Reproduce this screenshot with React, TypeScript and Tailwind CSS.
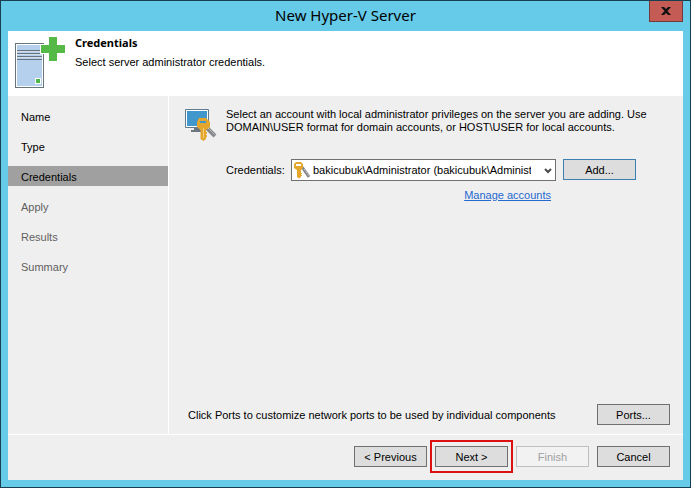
import { useState } from "react";
import type { ButtonHTMLAttributes } from "react";

const steps = ["Name", "Type", "Credentials", "Apply", "Results", "Summary"];
const currentStep = 2;

function stepColor(index: number) {
  if (index === currentStep) return "bg-[#a0a0a0] text-black";
  return index < currentStep ? "text-black" : "text-[#5f5f5f]";
}

function Button({ className = "border-[#707070] bg-[#dddddd] text-black", ...props }: ButtonHTMLAttributes<HTMLButtonElement>) {
  return <button type="button" className={`h-[21px] w-[73px] shrink-0 border ${className}`} {...props} />;
}

function ServerIcon() {
  return (
    <svg width="52" height="52" viewBox="0 0 52 52" aria-hidden="true" shapeRendering="crispEdges">
      <rect x="1.5" y="7.5" width="28" height="44" fill="#fff" stroke="#69757d" />
      <rect x="3" y="9" width="25" height="41" fill="#b5d0ed" />
      <path d="M3 14.5h25M3 17.5h25M3 20.5h25M3 23.5h25" stroke="#66727e" />
      <path d="M3 15.5h25M3 18.5h25M3 21.5h25" stroke="#d3deea" />
      <rect x="21" y="42" width="6" height="6" fill="#fff" />
      <rect x="22" y="43" width="4" height="4" fill="#4fb749" />
      <path d="M34 0h10v8h8v10h-8v8H34v-8h-8V8h8z" fill="#fff" />
      <path d="M35 1h8v8h8v8h-8v8h-8v-8h-8V9h8z" fill="#55b948" />
    </svg>
  );
}

function Keys() {
  return (
    <>
      <path d="M9 6l7 10" stroke="#85878b" strokeWidth="3" />
      <path d="M11 8l5 7" stroke="#c8c9cb" strokeDasharray="2 1" />
      <path fillRule="evenodd" d="M3 1h5l2 2v4L8 9v7l-2 1.500L4 16V9L1 7V3zM3 3v2h5V3z" fill="#e5a62e" />
      <path d="M8 12.500h1M8 14.500h1" stroke="#e5a62e" />
    </>
  );
}

function AccountIcon() {
  return (
    <svg width="32" height="33" viewBox="0 0 32 33" aria-hidden="true">
      <path d="M.5 1.500h23v18H.5z" fill="#fff" stroke="#607b8b" />
      <path d="M2 3h20v15H2z" fill="#3f97cc" />
      <path d="M9 20h6v2h4v2H6v-2h3z" fill="#6c777f" />
      <path d="M21 19l9 9" stroke="#efefef" strokeWidth="6" />
      <path d="M21 19l9 9" stroke="#85878b" strokeWidth="4" />
      <path d="M23 20l7 7" stroke="#c8c9cb" strokeDasharray="2 1" />
      <path fillRule="evenodd" d="M14 10h7l4 4v5l-4 3v9l-2.500 2-3-2v-9L12 19v-5zM15 13v2h6v-2z" fill="#e5a62e" />
      <path d="M21 25h1M21 28h1" stroke="#e5a62e" strokeWidth="2" />
      <path d="M18.500 20v10" stroke="#f6ce75" />
    </svg>
  );
}

export default function App() {
  const [account, setAccount] = useState("admin");
  return (
    <div className="flex min-h-screen flex-col border border-[#173f50] bg-[#66cae9] px-[7px] pb-[7px] font-['Liberation_Sans',Arial,sans-serif] text-[11px] leading-[14px] text-black">
      <header className="grid h-[30px] shrink-0 grid-cols-[1fr_auto_1fr] items-start">
        <h1 className="col-start-2 pt-[3px] font-['Noto_Sans',sans-serif] text-[15px] leading-[22px]">New Hyper-V Server</h1>
        <button type="button" aria-label="Close" className="flex h-[21px] w-[34px] items-center justify-center justify-self-end border border-t-0 border-[#713b3b] bg-[#c45b55]">
          <svg width="10" height="8" viewBox="0 0 10 8" aria-hidden="true">
            <path d="M0 0h3l2 2 2-2h3L6.500 4 10 8H7L5 6 3 8H0l3.500-4z" fill="#111" />
          </svg>
        </button>
      </header>

      <section className="flex h-[65px] shrink-0 gap-2 bg-white pt-[5px] pl-[6px]">
        <ServerIcon />
        <div className="flex flex-col gap-[5px] pl-px">
          <h2 className="font-['Noto_Sans',sans-serif] text-[11px] leading-[14px] font-bold">Credentials</h2>
          <p>Select server administrator credentials.</p>
        </div>
      </section>

      <div className="flex flex-1 border-b border-white bg-[#efefef]">
        <ol className="flex w-[160px] shrink-0 flex-col gap-[10px] pt-[10px]">
          {steps.map((step, index) => (
            <li key={step} aria-current={index === currentStep ? "step" : undefined} className={`h-5 pl-[13px] leading-[22px] ${stepColor(index)}`}>
              {step}
            </li>
          ))}
        </ol>

        <main className="flex flex-1 flex-col border-l border-white pt-3 pr-[13px] pb-[9px] pl-4">
          <div className="flex gap-[9px]">
            <AccountIcon />
            <p className="flex-1 leading-[13px]">
              Select an account with local administrator privileges on the server you are adding. Use
              <br />
              DOMAIN\USER format for domain accounts, or HOST\USER for local accounts.
            </p>
          </div>

          <div className="mt-[18px] flex pl-[41px]">
            <label htmlFor="account" className="w-[65px] shrink-0 leading-[22px]">Credentials:</label>
            <div className="flex w-[265px] flex-col gap-[7px]">
              <div className="relative">
                <select id="account" value={account} onChange={(event) => setAccount(event.target.value)} className="h-[22px] w-full appearance-none border border-[#707070] bg-white pr-6 pl-[21px]">
                  <option value="admin">bakicubuk\Administrator (bakicubuk\Administrator)</option>
                </select>
                <svg className="pointer-events-none absolute top-[2px] left-[2px]" width="17" height="18" viewBox="0 0 17 18" aria-hidden="true">
                  <Keys />
                </svg>
                <svg className="pointer-events-none absolute top-[9px] right-1" width="8" height="6" viewBox="0 0 8 6" aria-hidden="true">
                  <path d="M1 1l3 3 3-3" fill="none" stroke="#4a4a4a" strokeWidth="2" />
                </svg>
              </div>
              <a href="#accounts" className="self-end pr-[5px] text-[#2369cf] underline">Manage accounts</a>
            </div>
            <Button className="ml-[7px] border-[#3c7fb1] bg-[#dddddd]">Add...</Button>
          </div>

          <div className="mt-auto flex items-center justify-between pl-[3px]">
            <p>Click Ports to customize network ports to be used by individual components</p>
            <Button>Ports...</Button>
          </div>
        </main>
      </div>

      <footer className="flex h-[45px] shrink-0 items-start justify-end gap-2 bg-[#efefef] pt-[11px] pr-[13px]">
        <Button>&lt; Previous</Button>
        <div className="relative flex">
          <Button>Next &gt;</Button>
          <span className="pointer-events-none absolute -inset-x-[5px] -inset-y-[6px] border-2 border-[#dc1010]" />
        </div>
        <Button disabled className="border-[#bfbfbf] bg-[#f2f2f2] text-[#a0a0a0]">Finish</Button>
        <Button>Cancel</Button>
      </footer>
    </div>
  );
}
